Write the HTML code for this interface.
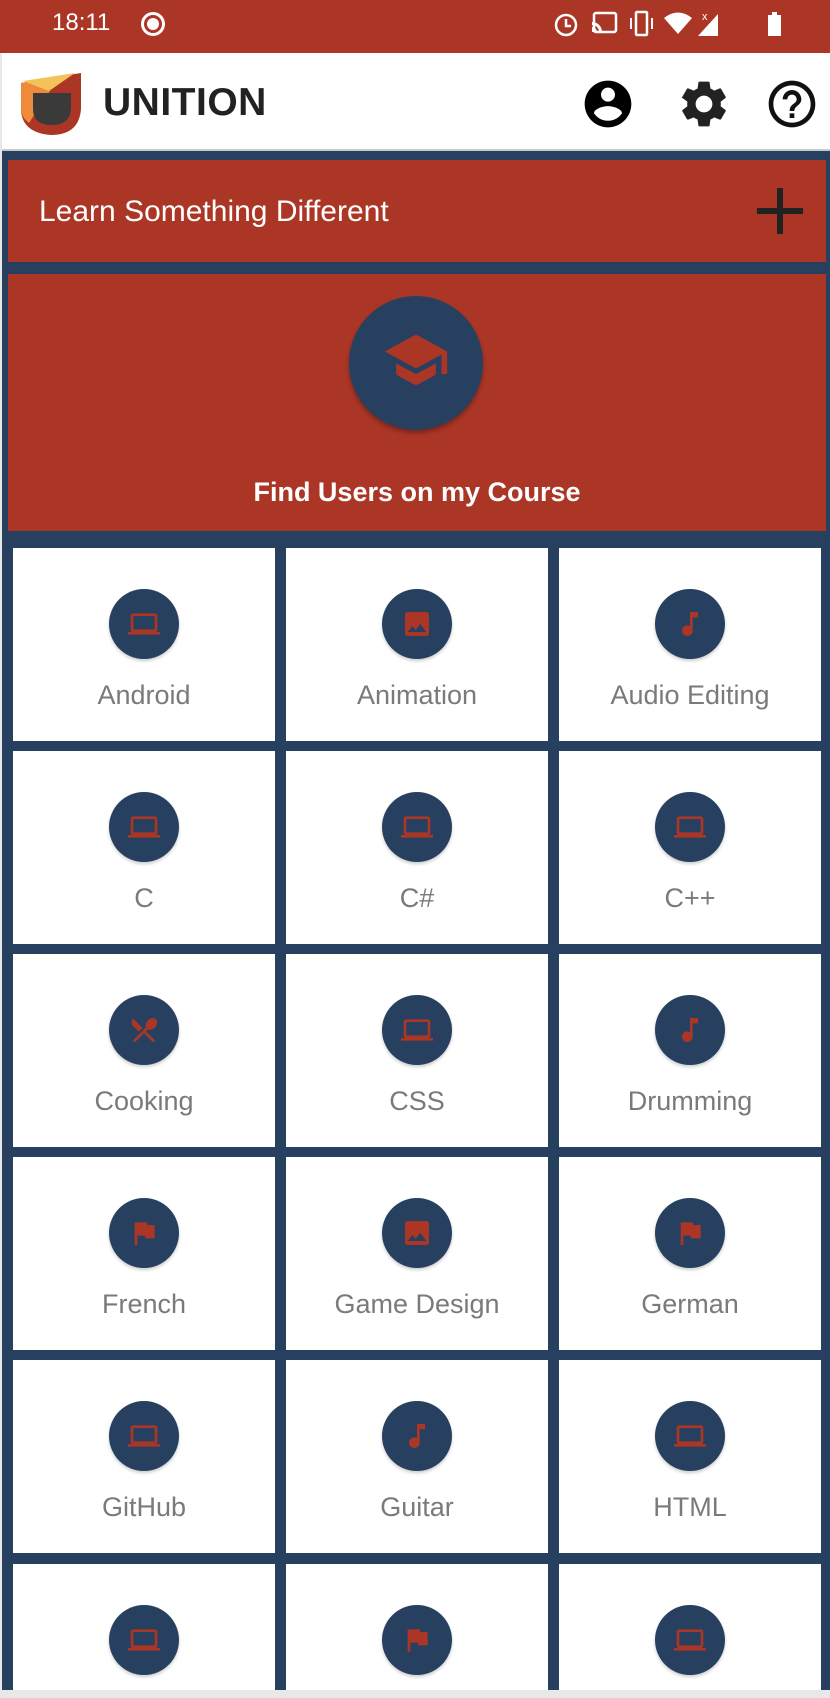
<!DOCTYPE html>
<html><head><meta charset="utf-8">
<style>
*{margin:0;padding:0;box-sizing:border-box}
html{width:830px;height:1698px;overflow:hidden}
body{width:830px;height:1698px;overflow:hidden;background:#27405f;font-family:"Liberation Sans",sans-serif;position:relative}
.status{position:absolute;left:0;top:0;width:830px;height:53px;background:#ab3626;color:#fff}
.appbar{position:absolute;left:0;top:53px;width:830px;height:98px;background:#fff;border-bottom:2px solid #c9c9c9}
.banner{position:absolute;left:8px;width:818px;background:#ab3626;color:#fff}
.tile{position:absolute;width:262px;height:193px;background:#fff;overflow:hidden}
.tile .c{position:absolute;left:96px;top:41px;width:70px;height:70px;border-radius:50%;background:#27405f;box-shadow:0 2px 3px rgba(0,0,0,.2)}
.tile .c svg{position:absolute;left:19px;top:19px;width:32px;height:32px}
.tile .l{position:absolute;left:0;width:262px;top:131px;text-align:center;font-size:27px;color:#7a7a7a;line-height:32px}
</style></head><body>
<div class="status">
 <div style="position:absolute;left:52px;top:9px;font-size:24px;line-height:28px">18:11</div>
 <div style="position:absolute;left:141px;top:12px;width:24px;height:24px;border:3px solid #fff;border-radius:50%"><div style="position:absolute;left:3px;top:3px;width:12px;height:12px;background:#fff;border-radius:50%"></div></div>
 <svg style="position:absolute;left:552px;top:10px" width="235" height="28" viewBox="0 0 235 28" fill="#fff">
  <circle cx="14" cy="15" r="10" fill="none" stroke="#fff" stroke-width="2.5"/><path d="M14 9v7h5" stroke="#fff" stroke-width="2.5" fill="none"/>
  <rect x="42" y="3" width="22" height="19" rx="2" fill="none" stroke="#fff" stroke-width="2.5"/><path d="M40 12a10 10 0 0 1 10 10h-3a7 7 0 0 0-7-7zM40 17a5 5 0 0 1 5 5h-5z"/>
  <rect x="84" y="2" width="11" height="23" rx="1" fill="none" stroke="#fff" stroke-width="2.5"/><path d="M79 8v11M100 8v11" stroke="#fff" stroke-width="2"/>
  <path d="M112 8q14-11 28 0l-14 16z"/>
  <path d="M146 26l20-22v22z"/><text x="150" y="10" font-size="11" fill="#fff" font-family="Liberation Sans">x</text>
  <rect x="216" y="5" width="13" height="21"/><rect x="220" y="2" width="5" height="3"/>
 </svg>
</div>
<div class="appbar">
 <svg style="position:absolute;left:19px;top:20px" width="64" height="62" viewBox="0 0 64 62">
  <path d="M2 10L62 0V36Q60 62 32 62Q4 60 2 38Z" fill="#ab3626"/>
  <path d="M2 10L40 4L10 50Q2 44 2 36Z" fill="#ef8a3a"/>
  <path d="M4 8L56 0L30 18Z" fill="#f3c25a"/>
  <path d="M14 20H52V34Q52 52 33 52Q14 52 14 36Z" fill="#3a3a3a"/>
 </svg>
 <div style="position:absolute;left:103px;top:28px;font-size:39px;font-weight:bold;color:#222;line-height:44px;letter-spacing:.5px">UNITION</div>
 <svg style="position:absolute;left:580px;top:23px" width="56" height="56" viewBox="0 0 24 24"><path d="M12 2C6.48 2 2 6.48 2 12s4.48 10 10 10 10-4.48 10-10S17.52 2 12 2zm0 3c1.66 0 3 1.34 3 3s-1.34 3-3 3-3-1.340-3-3 1.34-3 3-3zm0 14.2c-2.5 0-4.71-1.28-6-3.22.03-1.99 4-3.08 6-3.08 1.99 0 5.97 1.09 6 3.08-1.29 1.94-3.5 3.22-6 3.22z" fill="#000"/></svg>
 <svg style="position:absolute;left:676px;top:23px" width="56" height="56" viewBox="0 0 24 24"><path d="M19.14 12.94c.04-.3.06-.61.06-.94 0-.32-.02-.64-.07-.94l2.03-1.58a.49.49 0 0 0 .12-.61l-1.92-3.32a.488.488 0 0 0-.59-.22l-2.39.96c-.5-.38-1.03-.7-1.62-.94l-.36-2.54a.484.484 0 0 0-.48-.41h-3.84c-.24 0-.43.17-.47.41l-.36 2.54c-.59.24-1.13.57-1.62.94l-2.39-.96c-.22-.08-.47 0-.59.22L2.74 8.87c-.12.21-.8.47.12.61l2.03 1.58c-.05.3-.09.63-.09.94s.02.64.07.94l-2.03 1.58a.49.49 0 0 0-.12.61l1.92 3.32c.12.22.37.29.59.22l2.39-.96c.5.38 1.03.7 1.62.94l.36 2.54c.05.24.24.41.48.41h3.84c.24 0 .44-.17.47-.41l.36-2.54c.59-.24 1.13-.56 1.62-.94l2.39.96c.22.08.47 0 .59-.22l1.92-3.32c.12-.22.07-.47-.12-.61l-2.01-1.58zM12 15.6c-1.98 0-3.6-1.62-3.6-3.6s1.62-3.6 3.6-3.6 3.6 1.62 3.6 3.6-1.62 3.6-3.6 3.6z" fill="#222"/></svg>
 <svg style="position:absolute;left:764px;top:23px" width="56" height="56" viewBox="0 0 24 24"><path d="M11 18h2v-2h-2v2zm1-16C6.48 2 2 6.48 2 12s4.48 10 10 10 10-4.48 10-10S17.52 2 12 2zm0 18c-4.41 0-8-3.59-8-8s3.59-8 8-8 8 3.59 8 8-3.59 8-8 8zm0-14c-2.21 0-4 1.79-4 4h2c0-1.1.9-2 2-2s2 .9 2 2c0 2-3 1.75-3 5h2c0-2.25 3-2.5 3-5 0-2.21-1.79-4-4-4z" fill="#111"/></svg>
</div>
<div class="banner" style="top:160px;height:102px">
 <div style="position:absolute;left:31px;top:34px;font-size:30px;line-height:36px">Learn Something Different</div>
 <div style="position:absolute;left:749px;top:28px;width:46px;height:46px">
  <div style="position:absolute;left:20px;top:0;width:6px;height:46px;background:#222"></div>
  <div style="position:absolute;left:0;top:20px;width:46px;height:6px;background:#222"></div>
 </div>
</div>
<div class="banner" style="top:274px;height:257px">
 <div style="position:absolute;left:341px;top:22px;width:134px;height:134px;border-radius:50%;background:#27405f;box-shadow:0 3px 5px rgba(0,0,0,.3)">
  <svg style="position:absolute;left:33px;top:30px" width="68" height="68" viewBox="0 0 24 24"><path d="M5 13.18v4L12 21l7-3.82v-4L12 17l-7-3.82zM12 3L1 9l11 6 9-4.91V17h2V9L12 3z" fill="#ab3626"/></svg>
 </div>
 <div style="position:absolute;left:0;width:818px;top:201px;text-align:center;font-size:27px;font-weight:bold;line-height:34px">Find Users on my Course</div>
</div>

<svg width="0" height="0" style="position:absolute">
 <defs>
  <path id="lap" d="M20 18c1.1 0 2-.9 2-2V6c0-1.1-.9-2-2-2H4c-1.1 0-2 .9-2 2v10c0 1.1.9 2 2 2H0v2h24v-2h-4zM4 6h16v10H4V6z"/>
  <path id="img" d="M21 19V5c0-1.1-.9-2-2-2H5c-1.1 0-2 .9-2 2v14c0 1.1.9 2 2 2h14c1.1 0 2-.9 2-2zM8.5 13.5l2.5 3.01L14.5 12l4.5 6H5l3.5-4.5z"/>
  <path id="mus" d="M12 3v10.55c-.59-.34-1.27-.55-2-.55-2.21 0-4 1.79-4 4s1.79 4 4 4 4-1.79 4-4V7h4V3h-6z"/>
  <path id="flg" d="M14.4 6L14 4H5v17h2v-7h5.6l.4 2h7V6z"/>
  <path id="food" d="M8.1 13.34l2.83-2.83L3.91 3.5c-1.56 1.56-1.56 4.09 0 5.66l4.19 4.18zm6.78-1.81c1.53.71 3.68.21 5.27-1.38 1.91-1.91 2.28-4.65.81-6.12-1.46-1.46-4.2-1.1-6.12.81-1.59 1.59-2.09 3.74-1.38 5.27L3.7 19.87l1.41 1.41L12 14.41l6.88 6.88 1.41-1.41L13.41 13l1.47-1.47z"/>
 </defs>
</svg>

<div class="tile" style="left:13px;top:548px"><div class="c"><svg viewBox="0 0 24 24"><use href="#lap" fill="#ab3626"/></svg></div><div class="l">Android</div></div>
<div class="tile" style="left:286px;top:548px"><div class="c"><svg viewBox="0 0 24 24"><use href="#img" fill="#ab3626"/></svg></div><div class="l">Animation</div></div>
<div class="tile" style="left:559px;top:548px"><div class="c"><svg viewBox="0 0 24 24"><use href="#mus" fill="#ab3626"/></svg></div><div class="l">Audio Editing</div></div>
<div class="tile" style="left:13px;top:751px"><div class="c"><svg viewBox="0 0 24 24"><use href="#lap" fill="#ab3626"/></svg></div><div class="l">C</div></div>
<div class="tile" style="left:286px;top:751px"><div class="c"><svg viewBox="0 0 24 24"><use href="#lap" fill="#ab3626"/></svg></div><div class="l">C#</div></div>
<div class="tile" style="left:559px;top:751px"><div class="c"><svg viewBox="0 0 24 24"><use href="#lap" fill="#ab3626"/></svg></div><div class="l">C++</div></div>
<div class="tile" style="left:13px;top:954px"><div class="c"><svg viewBox="0 0 24 24"><use href="#food" fill="#ab3626"/></svg></div><div class="l">Cooking</div></div>
<div class="tile" style="left:286px;top:954px"><div class="c"><svg viewBox="0 0 24 24"><use href="#lap" fill="#ab3626"/></svg></div><div class="l">CSS</div></div>
<div class="tile" style="left:559px;top:954px"><div class="c"><svg viewBox="0 0 24 24"><use href="#mus" fill="#ab3626"/></svg></div><div class="l">Drumming</div></div>
<div class="tile" style="left:13px;top:1157px"><div class="c"><svg viewBox="0 0 24 24"><use href="#flg" fill="#ab3626"/></svg></div><div class="l">French</div></div>
<div class="tile" style="left:286px;top:1157px"><div class="c"><svg viewBox="0 0 24 24"><use href="#img" fill="#ab3626"/></svg></div><div class="l">Game Design</div></div>
<div class="tile" style="left:559px;top:1157px"><div class="c"><svg viewBox="0 0 24 24"><use href="#flg" fill="#ab3626"/></svg></div><div class="l">German</div></div>
<div class="tile" style="left:13px;top:1360px"><div class="c"><svg viewBox="0 0 24 24"><use href="#lap" fill="#ab3626"/></svg></div><div class="l">GitHub</div></div>
<div class="tile" style="left:286px;top:1360px"><div class="c"><svg viewBox="0 0 24 24"><use href="#mus" fill="#ab3626"/></svg></div><div class="l">Guitar</div></div>
<div class="tile" style="left:559px;top:1360px"><div class="c"><svg viewBox="0 0 24 24"><use href="#lap" fill="#ab3626"/></svg></div><div class="l">HTML</div></div>
<div class="tile" style="left:13px;top:1564px;height:126px"><div class="c"><svg viewBox="0 0 24 24"><use href="#lap" fill="#ab3626"/></svg></div></div>
<div class="tile" style="left:286px;top:1564px;height:126px"><div class="c"><svg viewBox="0 0 24 24"><use href="#flg" fill="#ab3626"/></svg></div></div>
<div class="tile" style="left:559px;top:1564px;height:126px"><div class="c"><svg viewBox="0 0 24 24"><use href="#lap" fill="#ab3626"/></svg></div></div>

<div style="position:absolute;left:0;top:1690px;width:830px;height:8px;background:#e8e8e8"></div>
<div style="position:absolute;left:0;top:53px;width:2px;height:1645px;background:#e8e8e8"></div>
</body></html>
